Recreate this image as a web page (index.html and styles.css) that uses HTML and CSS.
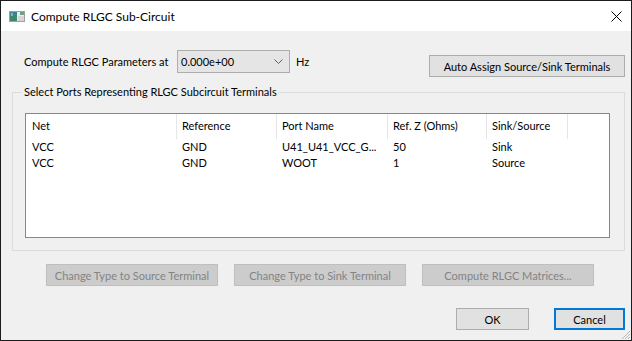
FILE: index.html
```html
<!DOCTYPE html>
<html lang="en">
<head>
    <meta charset="UTF-8">
    <title>Compute RLGC Sub-Circuit</title>
    <link rel="stylesheet" href="styles.css">
</head>
<body>
    <div class="window">
        <div class="titlebar">
            <svg class="app-icon" width="16" height="11" viewBox="0 0 16 11">
                <defs>
                    <linearGradient id="pane" x1="0" y1="0" x2="0" y2="1">
                        <stop offset="0" stop-color="#3f7f9a"/>
                        <stop offset="1" stop-color="#3d8a5c"/>
                    </linearGradient>
                </defs>
                <rect x="0.5" y="0.5" width="15" height="10" fill="#ececec" stroke="#a0a0a0"/>
                <rect x="1" y="1" width="7" height="9" fill="url(#pane)"/>
                <rect x="2" y="2" width="2" height="3" fill="#7fb6c9"/>
                <rect x="11" y="1" width="4" height="3" fill="#6aa583"/>
                <rect x="9" y="5" width="6" height="5" fill="#d6d6d6"/>
            </svg>
            <span class="title">Compute RLGC Sub-Circuit</span>
            <svg class="close" width="11" height="11" viewBox="0 0 11 11">
                <path d="M0.5 0.5 L10.5 10.5 M10.5 0.5 L0.5 10.5" stroke="#000" stroke-width="1"/>
            </svg>
        </div>

        <div class="content">
            <div class="freq-row">
                <label class="freq-label">Compute RLGC Parameters at</label>
                <div class="combo">
                    <span>0.000e+00</span>
                    <svg width="9" height="5" viewBox="0 0 9 5">
                        <path d="M0.5 0.5 L4.5 4.5 L8.5 0.5" fill="none" stroke="#606060"/>
                    </svg>
                </div>
                <span class="unit">Hz</span>
                <button class="btn auto-assign">Auto Assign Source/Sink Terminals</button>
            </div>

            <fieldset class="ports">
                <legend>Select Ports Representing RLGC Subcircuit Terminals</legend>
                <div class="list">
                    <div class="list-row list-head">
                        <div class="cell">Net</div>
                        <div class="cell">Reference</div>
                        <div class="cell">Port Name</div>
                        <div class="cell">Ref. Z (Ohms)</div>
                        <div class="cell">Sink/Source</div>
                    </div>
                    <div class="list-row">
                        <div class="cell">VCC</div>
                        <div class="cell">GND</div>
                        <div class="cell">U41_U41_VCC_G...</div>
                        <div class="cell">50</div>
                        <div class="cell">Sink</div>
                    </div>
                    <div class="list-row">
                        <div class="cell">VCC</div>
                        <div class="cell">GND</div>
                        <div class="cell">WOOT</div>
                        <div class="cell">1</div>
                        <div class="cell">Source</div>
                    </div>
                </div>
            </fieldset>

            <div class="actions">
                <button class="btn" disabled>Change Type to Source Terminal</button>
                <button class="btn" disabled>Change Type to Sink Terminal</button>
                <button class="btn" disabled>Compute RLGC Matrices...</button>
            </div>

            <div class="dialog-buttons">
                <button class="btn ok">OK</button>
                <button class="btn cancel">Cancel</button>
            </div>
        </div>

        <svg class="grip" width="10" height="10" viewBox="0 0 10 10">
            <path d="M9 1 L1 9 M9 4 L4 9 M9 7 L7 9" stroke="#b8b8b8" stroke-width="1"/>
        </svg>
    </div>
</body>
</html>
```

FILE: styles.css
```css
* {
    box-sizing: border-box;
}
body {
    margin: 0;
    font-family: Lato, "Noto Sans", sans-serif;
    font-size: 11px;
    color: #000;
    background: #fff;
}
.window {
    position: relative;
    width: 632px;
    height: 341px;
    border: 1px solid #1c1c1c;
    display: flex;
    flex-direction: column;
}
.titlebar {
    height: 30px;
    background: #fff;
    display: flex;
    align-items: center;
    padding-left: 8px;
    padding-right: 9px;
}
.app-icon {
    display: block;
    margin-top: 1px;
}
.title {
    margin-left: 6px;
    font-size: 12px;
    flex: 1;
}
.close {
    display: block;
    margin-top: 1px;
}
.content {
    flex: 1;
    background: #f0f0f0;
    padding: 19px 6px 0 11px;
}
.freq-row {
    display: flex;
    align-items: flex-start;
}
.freq-label {
    width: 153px;
    margin-left: 12px;
    line-height: 23px;
    white-space: nowrap;
}
.combo {
    width: 113px;
    height: 23px;
    border: 1px solid #adadad;
    background: #e5e5e5;
    display: flex;
    align-items: center;
    justify-content: space-between;
    padding: 0 6px 0 3px;
}
.combo svg {
    display: block;
}
.unit {
    margin-left: 6px;
    line-height: 23px;
}
.btn {
    height: 22px;
    padding: 0;
    border: 1px solid #adadad;
    background: #e1e1e1;
    font-family: inherit;
    font-size: 11px;
    color: #000;
    white-space: nowrap;
}
.btn:disabled {
    background: #cccccc;
    border-color: #bfbfbf;
    color: #838383;
}
.auto-assign {
    width: 196px;
    margin-left: auto;
    margin-top: 5px;
}
.ports {
    margin: 7px 0 0;
    padding: 13px 14px 12px 12px;
    border: 1px solid #dcdcdc;
    min-width: 0;
}
.ports legend {
    padding: 0 2px;
    margin-left: -3px;
    line-height: 16px;
}
.list {
    height: 125px;
    border: 1px solid #828790;
    background: #fff;
}
.list-row {
    display: grid;
    grid-template-columns: 151px 100px 111px 99px 81px;
    height: 16px;
    line-height: 16px;
}
.list-row .cell {
    padding-left: 5px;
    white-space: nowrap;
    overflow: hidden;
}
.list-row .cell:first-child {
    padding-left: 6px;
}
.list-head {
    height: 25px;
    line-height: 24px;
}
.list-head .cell {
    border-right: 1px solid #e5e5e5;
}
.actions {
    display: flex;
    gap: 16px;
    margin-top: 13px;
    padding-left: 34px;
}
.actions .btn {
    width: 172px;
}
.dialog-buttons {
    display: flex;
    justify-content: flex-end;
    gap: 25px;
    margin-top: 22px;
}
.ok {
    width: 73px;
}
.cancel {
    width: 71px;
    border: 2px solid #0078d7;
}
.grip {
    position: absolute;
    right: 0;
    bottom: 0;
}
```
